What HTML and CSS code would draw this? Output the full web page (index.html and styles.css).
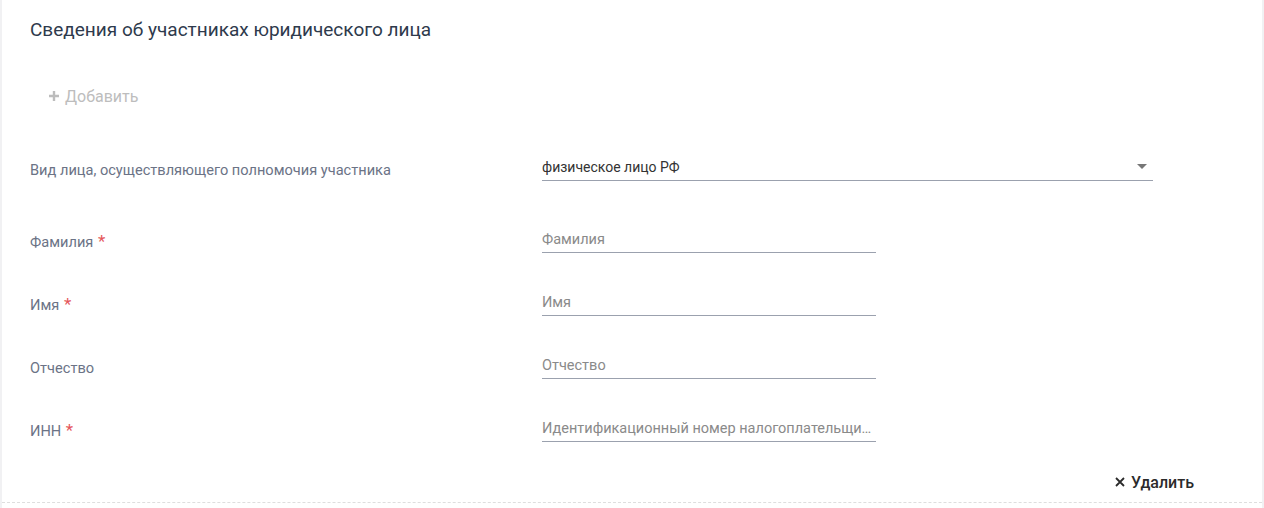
FILE: index.html
```html
<!DOCTYPE html>
<html lang="ru">
<head>
<meta charset="utf-8">
<title>Сведения об участниках</title>
<link rel="stylesheet" href="styles.css">
</head>
<body>
<section class="card">
  <h2 class="card-title">Сведения об участниках юридического лица</h2>
  <button class="btn-add" type="button">
    <svg class="icon-plus" width="12" height="12" viewBox="0 0 12 12"><path d="M6 1v10M1 6h10" stroke="currentColor" stroke-width="2.4"/></svg>
    <span>Добавить</span>
  </button>

  <div class="row row-select">
    <label class="label">Вид лица, осуществляющего полномочия участника</label>
    <div class="select">
      <span class="select-value">физическое лицо РФ</span>
      <svg class="select-arrow" width="10" height="5" viewBox="0 0 10 5"><path d="M0 0h10L5 5z" fill="currentColor"/></svg>
    </div>
  </div>

  <div class="fields">
    <div class="row">
      <label class="label">Фамилия <span class="req">*</span></label>
      <div class="input"><span class="placeholder">Фамилия</span></div>
    </div>
    <div class="row">
      <label class="label">Имя <span class="req">*</span></label>
      <div class="input"><span class="placeholder">Имя</span></div>
    </div>
    <div class="row">
      <label class="label">Отчество</label>
      <div class="input"><span class="placeholder">Отчество</span></div>
    </div>
    <div class="row">
      <label class="label">ИНН <span class="req">*</span></label>
      <div class="input"><span class="placeholder">Идентификационный номер налогоплательщика</span></div>
    </div>
  </div>

  <div class="actions">
    <button class="btn-remove" type="button">
      <svg class="icon-x" width="10" height="10" viewBox="0 0 10 10"><path d="M1 1l8 8M9 1l-8 8" stroke="currentColor" stroke-width="1.8"/></svg>
      <span>Удалить</span>
    </button>
  </div>
</section>
</body>
</html>
```

FILE: styles.css
```css
html, body {
  margin: 0;
  padding: 0;
  background: #ffffff;
}

body {
  font-family: Roboto, "Noto Sans", "Liberation Sans", sans-serif;
  color: #333333;
}

.card {
  box-sizing: border-box;
  width: 1264px;
  height: 508px;
  border-left: 2px solid #f1f1f3;
  border-right: 2px solid #f1f1f3;
  padding: 18px 0 0 28px;
  overflow: hidden;
}

.card-title {
  margin: 0;
  font-size: 19px;
  line-height: 24px;
  font-weight: 400;
  color: #2e3a4c;
}

.btn-add {
  display: flex;
  align-items: center;
  gap: 5px;
  height: 36px;
  margin: 36px 0 0 18px;
  padding: 0;
  border: 0;
  background: none;
  font: inherit;
  font-size: 16px;
  color: #bdbdbd;
  cursor: default;
}

.row {
  display: flex;
  align-items: center;
  height: 63px;
}

.row-select {
  height: 60px;
  margin-top: 26px;
}

.fields {
  margin-top: 10px;
}

.label {
  width: 512px;
  flex: none;
  font-size: 14.6px;
  line-height: 20px;
  color: #6b7386;
}

.req {
  color: #e5575b;
  font-size: 17px;
  margin-left: 1px;
}

.select {
  display: flex;
  align-items: center;
  justify-content: space-between;
  width: 611px;
  height: 26px;
  margin-bottom: 6px;
  border-bottom: 1px solid #9ba1ae;
  box-sizing: content-box;
}

.select-value {
  font-size: 14px;
  line-height: 26px;
  color: #333333;
}

.select-arrow {
  color: #777777;
  margin-right: 6px;
}

.input {
  width: 334px;
  height: 25px;
  padding-top: 1px;
  margin-bottom: 4px;
  border-bottom: 1px solid #9ba1ae;
  overflow: hidden;
  white-space: nowrap;
}

.placeholder {
  display: block;
  font-size: 14.5px;
  line-height: 26px;
  color: #8a8a8a;
  overflow: hidden;
  text-overflow: ellipsis;
  white-space: nowrap;
}

.actions {
  display: flex;
  justify-content: flex-end;
  align-items: center;
  height: 40px;
  margin-left: -28px;
  padding-right: 68px;
  border-bottom: 1px dashed #dedede;
}

.btn-remove {
  display: flex;
  align-items: center;
  gap: 6px;
  padding: 0;
  border: 0;
  background: none;
  font: inherit;
  font-size: 16px;
  font-weight: 500;
  color: #2b2b2b;
  cursor: default;
}
```
